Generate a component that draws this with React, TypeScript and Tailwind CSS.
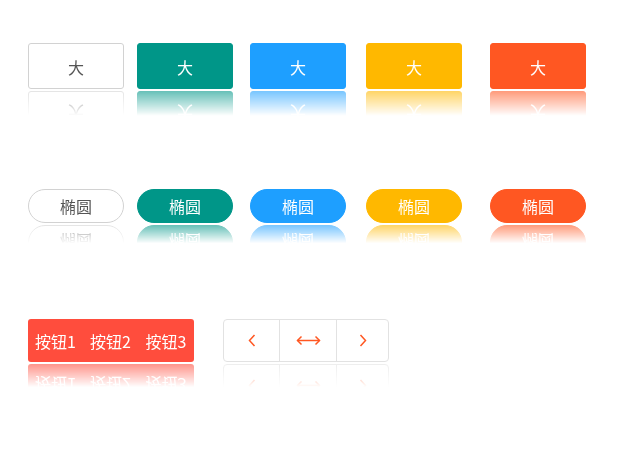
const reflect =
  "[-webkit-box-reflect:below_2px_linear-gradient(transparent_46%,rgba(255,255,255,0.6))]";

const colors = [
  "bg-white border-[#d2d2d2] text-[#555]",
  "bg-[#009688] border-[#009688] text-white",
  "bg-[#1e9fff] border-[#1e9fff] text-white",
  "bg-[#ffb800] border-[#ffb800] text-white",
  "bg-[#ff5722] border-[#ff5722] text-white",
];
const gaps = ["", "ml-[13px]", "ml-[17px]", "ml-[20px]", "ml-[28px]"];

function Chevron({ dir }: { dir: "left" | "right" }) {
  return (
    <svg width="8" height="13" viewBox="0 0 8 13" fill="none">
      <polyline
        points={dir === "left" ? "6.5,1 1.5,6.5 6.5,12" : "1.5,1 6.5,6.5 1.5,12"}
        stroke="#ff5722"
        strokeWidth="1.5"
      />
    </svg>
  );
}

function DoubleArrow() {
  return (
    <svg width="25" height="11" viewBox="0 0 25 11" fill="none">
      <line x1="1.5" y1="5.5" x2="23.5" y2="5.5" stroke="#ff5722" strokeWidth="1.5" />
      <polyline points="5.5,1.5 1.5,5.5 5.5,9.5" stroke="#ff5722" strokeWidth="1.5" />
      <polyline points="19.5,1.5 23.5,5.5 19.5,9.5" stroke="#ff5722" strokeWidth="1.5" />
    </svg>
  );
}

export default function App() {
  return (
    <div
      className="w-[624px] h-[456px] bg-white pt-[43px] pl-[28px]"
      style={{ fontFamily: '"Noto Sans CJK SC", "Liberation Sans", sans-serif' }}
    >
      {/* big square buttons */}
      <div className="flex">
        {colors.map((c, i) => (
          <div
            key={i}
            className={`${gaps[i]} w-[96px] h-[46px] border rounded-[3px] flex items-center justify-center pt-[2px] text-[16px] ${c} ${reflect}`}
          >
            大
          </div>
        ))}
      </div>

      {/* pill buttons */}
      <div className="flex mt-[100px]">
        {colors.map((c, i) => (
          <div
            key={i}
            className={`${gaps[i]} w-[96px] h-[34px] border rounded-full flex items-center justify-center text-[16px] ${c} ${reflect}`}
          >
            椭圆
          </div>
        ))}
      </div>

      {/* groups */}
      <div className="flex mt-[96px]">
        <div
          className={`w-[166px] h-[43px] rounded-[3px] bg-[#ff4d3d] text-white text-[16px] flex items-center pt-[1px] ${reflect}`}
        >
          <span className="w-[55px] text-center">按钮1</span>
          <span className="w-[55px] text-center">按钮2</span>
          <span className="w-[56px] text-center">按钮3</span>
        </div>

        <div
          className={`ml-[29px] w-[166px] h-[43px] rounded-[4px] border border-[#e2e2e2] bg-white flex ${reflect}`}
        >
          <div className="w-[56px] flex items-center justify-center border-r border-[#e2e2e2]">
            <Chevron dir="left" />
          </div>
          <div className="w-[57px] flex items-center justify-center border-r border-[#e2e2e2]">
            <DoubleArrow />
          </div>
          <div className="flex-1 flex items-center justify-center">
            <Chevron dir="right" />
          </div>
        </div>
      </div>
    </div>
  );
}
